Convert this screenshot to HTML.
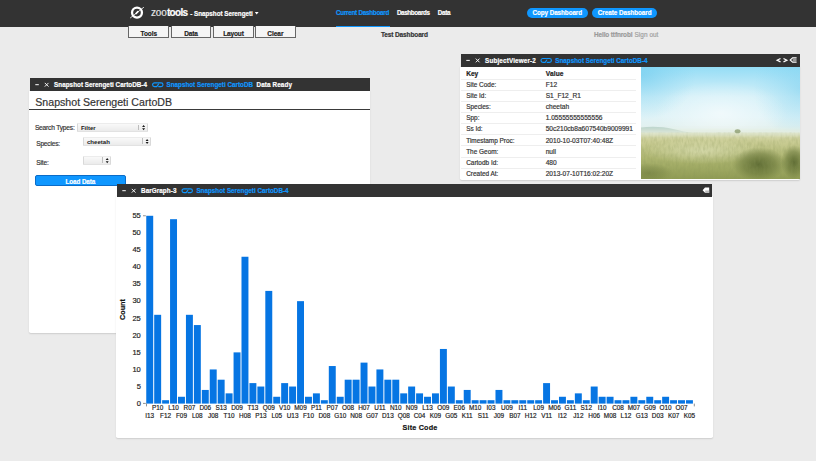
<!DOCTYPE html>
<html><head><meta charset="utf-8"><title>zootools</title>
<style>
html,body{margin:0;padding:0}
body{width:816px;height:461px;overflow:hidden;background:#ebebeb;font-family:"Liberation Sans",sans-serif;position:relative;color:#333}
*{box-sizing:border-box}
.a{position:absolute}
.pill{position:absolute;top:7.7px;height:10.7px;border-radius:5.4px;background:#0f97ff}
.tb{position:absolute;top:26px;height:11.6px;width:40.6px;border:0.85px solid #666;border-top:none;background:#f5f5f5}
.panel{position:absolute;background:#fff;box-shadow:0 0.5px 1.6px rgba(0,0,0,.13);border-radius:0 0 1.8px 1.8px}
.sel{position:absolute;background:linear-gradient(#f9f9f9,#ebebeb);border:0.6px solid #d9d9d9;border-top-color:#ececec;border-bottom-color:#e2e2e2;border-radius:1px}
text{white-space:pre;stroke-width:0.18px}
.yt{font-size:7.5px;fill:#222;stroke:#222}
.xt{font-size:6.4px;fill:#222;stroke:#222}
.ax{font-size:7.2px;font-weight:bold;fill:#111;stroke:#111}
</style></head><body>
<div class="a" style="left:0;top:0;width:816px;height:26.9px;background:#333"></div>
<div class="a" style="left:336px;top:25.6px;width:53.5px;height:1.8px;background:#0f97ff"></div>
<div class="pill" style="left:526.8px;width:61.2px"></div><div class="pill" style="left:592.2px;width:65.3px"></div>
<div class="tb" style="left:128.2px"></div><div class="tb" style="left:170.5px"></div><div class="tb" style="left:213px"></div><div class="tb" style="left:255.4px"></div>
<div class="panel" style="left:29.2px;top:91px;width:341.2px;height:241.7px"></div>
<div class="a" style="left:29.8px;top:78.2px;width:340px;height:13px;background:#333"></div>
<div class="a" style="left:29.2px;top:108.9px;width:340.9px;height:0.9px;background:#3a3a3a"></div>
<div class="sel" style="left:76.6px;top:123.3px;width:71.1px;height:8.5px"><div class="a" style="right:7.8px;top:0.4px;bottom:0.4px;width:0.7px;background:#bdbdbd"></div></div>
<div class="sel" style="left:83px;top:137.1px;width:68.2px;height:8.6px"><div class="a" style="right:7.8px;top:0.4px;bottom:0.4px;width:0.7px;background:#bdbdbd"></div></div>
<div class="sel" style="left:83px;top:156.1px;width:28.3px;height:8.7px"><div class="a" style="right:7.8px;top:0.4px;bottom:0.4px;width:0.7px;background:#bdbdbd"></div></div>
<div class="a" style="left:35.3px;top:175.2px;width:91.1px;height:11.3px;border-radius:2px;background:#0f97ff;border:0.7px solid #0b6cc8"></div>
<div class="panel" style="left:460.2px;top:66.5px;width:340.3px;height:113.1px"></div>
<div class="a" style="left:460.8px;top:53.7px;width:339.2px;height:13px;background:#333"></div>
<div class="a" style="left:461px;top:78.90px;width:175px;height:0.7px;background:#eeeeee"></div>
<div class="a" style="left:461px;top:89.99px;width:175px;height:0.7px;background:#eeeeee"></div>
<div class="a" style="left:461px;top:101.08px;width:175px;height:0.7px;background:#eeeeee"></div>
<div class="a" style="left:461px;top:112.17px;width:175px;height:0.7px;background:#eeeeee"></div>
<div class="a" style="left:461px;top:123.26px;width:175px;height:0.7px;background:#eeeeee"></div>
<div class="a" style="left:461px;top:134.35px;width:175px;height:0.7px;background:#eeeeee"></div>
<div class="a" style="left:461px;top:145.44px;width:175px;height:0.7px;background:#eeeeee"></div>
<div class="a" style="left:461px;top:156.53px;width:175px;height:0.7px;background:#eeeeee"></div>
<div class="a" style="left:461px;top:167.62px;width:175px;height:0.7px;background:#eeeeee"></div>

<svg class="a" style="left:641px;top:66.7px" width="159" height="111.95" viewBox="0 0 159 111.95">
<defs>
<linearGradient id="sky" x1="0" y1="0" x2="0" y2="1"><stop offset="0" stop-color="#92dcf5"/><stop offset="0.22" stop-color="#b4e6f7"/><stop offset="0.45" stop-color="#d3f0f8"/><stop offset="0.75" stop-color="#e0f3f7"/><stop offset="1" stop-color="#e3efea"/></linearGradient>
<radialGradient id="cy" cx="0.5" cy="0.5" r="0.5"><stop offset="0" stop-color="#6fcbee" stop-opacity="0.6"/><stop offset="1" stop-color="#7fd3f2" stop-opacity="0"/></radialGradient>
<radialGradient id="wh" cx="0.5" cy="0.5" r="0.5"><stop offset="0" stop-color="#fff" stop-opacity="0.55"/><stop offset="1" stop-color="#fff" stop-opacity="0"/></radialGradient>
<linearGradient id="grass" x1="0" y1="0" x2="0" y2="1"><stop offset="0" stop-color="#d6d7a8"/><stop offset="0.22" stop-color="#c8cb92"/><stop offset="0.55" stop-color="#adb570"/><stop offset="1" stop-color="#8f9b53"/></linearGradient>
<radialGradient id="dk" cx="0.5" cy="0.5" r="0.5"><stop offset="0" stop-color="#4d5c27" stop-opacity="0.8"/><stop offset="0.6" stop-color="#56652c" stop-opacity="0.45"/><stop offset="1" stop-color="#56652c" stop-opacity="0"/></radialGradient>
<radialGradient id="lt" cx="0.5" cy="0.5" r="0.5"><stop offset="0" stop-color="#dcdfb4" stop-opacity="0.75"/><stop offset="1" stop-color="#dcdfb4" stop-opacity="0"/></radialGradient>
<filter id="gr" x="0" y="0" width="1" height="1"><feTurbulence type="fractalNoise" baseFrequency="0.4 0.16" numOctaves="2" seed="4"/><feColorMatrix type="matrix" values="0 0 0 0 0.25  0 0 0 0 0.3  0 0 0 0 0.1  0.9 0 0 0 -0.32"/></filter>
<filter id="bl" x="-0.1" y="-2" width="1.2" height="5"><feGaussianBlur stdDeviation="2.2"/></filter>
<clipPath id="cp"><rect y="-1" width="159" height="113"/></clipPath>
</defs>
<g clip-path="url(#cp)">
<rect y="-1" width="159" height="68" fill="url(#sky)"/>
<ellipse cx="0" cy="8" rx="55" ry="45" fill="url(#cy)"/>
<ellipse cx="162" cy="22" rx="50" ry="50" fill="url(#cy)" opacity="0.8"/>
<ellipse cx="80" cy="46" rx="66" ry="32" fill="url(#wh)"/>
<path d="M0 60.5C10 59 22 59.5 32 62 40 64 46 65.3 52 66V67H0z" fill="#9fbdb0" opacity="0.55"/>
<rect y="65.6" width="159" height="47" fill="url(#grass)"/>
<ellipse cx="62" cy="84" rx="60" ry="13" fill="url(#lt)"/>
<ellipse cx="118" cy="97" rx="27" ry="17" fill="url(#dk)"/>
<ellipse cx="153" cy="95" rx="13" ry="17" fill="url(#dk)"/>
<ellipse cx="8" cy="106" rx="24" ry="10" fill="url(#dk)" opacity="0.45"/>
<rect y="66" width="159" height="46.5" filter="url(#gr)" opacity="0.6"/>
<rect x="-8" y="63" width="175" height="5.5" fill="#e2ebdc" opacity="0.85" filter="url(#bl)"/>
<ellipse cx="96.6" cy="64.2" rx="2.9" ry="2" fill="#879868" opacity="0.75"/>
</g></svg>
<div class="panel" style="left:116.1px;top:196.4px;width:597.2px;height:241.8px"></div>
<div class="a" style="left:116.8px;top:183.6px;width:595.5px;height:13px;background:#333"></div>
<svg class="a" style="left:0;top:0" width="816" height="461" viewBox="0 0 816 461" font-family="'Liberation Sans',sans-serif">
<g fill="#0675e3">
<rect x="146.25" y="215.78" width="6.95" height="187.82"/>
<rect x="154.19" y="314.81" width="6.95" height="88.79"/>
<rect x="162.12" y="400.19" width="6.95" height="3.42"/>
<rect x="170.06" y="219.19" width="6.95" height="184.41"/>
<rect x="178.00" y="396.77" width="6.95" height="6.83"/>
<rect x="185.94" y="314.81" width="6.95" height="88.79"/>
<rect x="193.87" y="325.06" width="6.95" height="78.55"/>
<rect x="201.81" y="389.94" width="6.95" height="13.66"/>
<rect x="209.75" y="369.45" width="6.95" height="34.15"/>
<rect x="217.68" y="379.70" width="6.95" height="23.91"/>
<rect x="225.62" y="393.36" width="6.95" height="10.25"/>
<rect x="233.56" y="352.38" width="6.95" height="51.23"/>
<rect x="241.49" y="256.75" width="6.95" height="146.84"/>
<rect x="249.43" y="383.11" width="6.95" height="20.49"/>
<rect x="257.37" y="386.53" width="6.95" height="17.07"/>
<rect x="265.31" y="290.91" width="6.95" height="112.70"/>
<rect x="273.24" y="396.77" width="6.95" height="6.83"/>
<rect x="281.18" y="383.11" width="6.95" height="20.49"/>
<rect x="289.12" y="386.53" width="6.95" height="17.07"/>
<rect x="297.05" y="301.15" width="6.95" height="102.45"/>
<rect x="304.99" y="396.77" width="6.95" height="6.83"/>
<rect x="312.93" y="393.36" width="6.95" height="10.25"/>
<rect x="320.86" y="400.19" width="6.95" height="3.42"/>
<rect x="328.80" y="366.04" width="6.95" height="37.56"/>
<rect x="336.74" y="396.77" width="6.95" height="6.83"/>
<rect x="344.68" y="379.70" width="6.95" height="23.91"/>
<rect x="352.61" y="379.70" width="6.95" height="23.91"/>
<rect x="360.55" y="362.62" width="6.95" height="40.98"/>
<rect x="368.49" y="386.53" width="6.95" height="17.07"/>
<rect x="376.42" y="369.45" width="6.95" height="34.15"/>
<rect x="384.36" y="379.70" width="6.95" height="23.91"/>
<rect x="392.30" y="379.70" width="6.95" height="23.91"/>
<rect x="400.23" y="393.36" width="6.95" height="10.25"/>
<rect x="408.17" y="386.53" width="6.95" height="17.07"/>
<rect x="416.11" y="393.36" width="6.95" height="10.25"/>
<rect x="424.05" y="396.77" width="6.95" height="6.83"/>
<rect x="431.98" y="393.36" width="6.95" height="10.25"/>
<rect x="439.92" y="348.96" width="6.95" height="54.64"/>
<rect x="447.86" y="386.53" width="6.95" height="17.07"/>
<rect x="455.79" y="400.19" width="6.95" height="3.42"/>
<rect x="463.73" y="389.94" width="6.95" height="13.66"/>
<rect x="471.67" y="400.19" width="6.95" height="3.42"/>
<rect x="479.60" y="400.19" width="6.95" height="3.42"/>
<rect x="487.54" y="400.19" width="6.95" height="3.42"/>
<rect x="495.48" y="389.94" width="6.95" height="13.66"/>
<rect x="503.42" y="400.19" width="6.95" height="3.42"/>
<rect x="511.35" y="400.19" width="6.95" height="3.42"/>
<rect x="519.29" y="400.19" width="6.95" height="3.42"/>
<rect x="527.23" y="400.19" width="6.95" height="3.42"/>
<rect x="535.16" y="400.19" width="6.95" height="3.42"/>
<rect x="543.10" y="383.11" width="6.95" height="20.49"/>
<rect x="551.04" y="400.19" width="6.95" height="3.42"/>
<rect x="558.97" y="396.77" width="6.95" height="6.83"/>
<rect x="566.91" y="400.19" width="6.95" height="3.42"/>
<rect x="574.85" y="393.36" width="6.95" height="10.25"/>
<rect x="582.79" y="400.19" width="6.95" height="3.42"/>
<rect x="590.72" y="386.53" width="6.95" height="17.07"/>
<rect x="598.66" y="396.77" width="6.95" height="6.83"/>
<rect x="606.60" y="396.77" width="6.95" height="6.83"/>
<rect x="614.53" y="400.19" width="6.95" height="3.42"/>
<rect x="622.47" y="400.19" width="6.95" height="3.42"/>
<rect x="630.41" y="396.77" width="6.95" height="6.83"/>
<rect x="638.34" y="400.19" width="6.95" height="3.42"/>
<rect x="646.28" y="396.77" width="6.95" height="6.83"/>
<rect x="654.22" y="400.19" width="6.95" height="3.42"/>
<rect x="662.15" y="396.77" width="6.95" height="6.83"/>
<rect x="670.09" y="400.19" width="6.95" height="3.42"/>
<rect x="678.03" y="400.19" width="6.95" height="3.42"/>
<rect x="685.97" y="400.19" width="6.95" height="3.42"/>
</g>
<text x="140.8" y="405.90" text-anchor="end" class="yt">0</text>
<text x="140.8" y="388.83" text-anchor="end" class="yt">5</text>
<text x="140.8" y="371.75" text-anchor="end" class="yt">10</text>
<text x="140.8" y="354.68" text-anchor="end" class="yt">15</text>
<text x="140.8" y="337.60" text-anchor="end" class="yt">20</text>
<text x="140.8" y="320.53" text-anchor="end" class="yt">25</text>
<text x="140.8" y="303.45" text-anchor="end" class="yt">30</text>
<text x="140.8" y="286.38" text-anchor="end" class="yt">35</text>
<text x="140.8" y="269.30" text-anchor="end" class="yt">40</text>
<text x="140.8" y="252.23" text-anchor="end" class="yt">45</text>
<text x="140.8" y="235.15" text-anchor="end" class="yt">50</text>
<text x="140.8" y="218.08" text-anchor="end" class="yt">55</text>
<path d="M143 215.78H145.8M143 403.40H145.8M146.5 403.60v2.8M694.3 403.60v2.8" stroke="#444" stroke-width="0.6" fill="none"/>
<text x="149.72" y="418" text-anchor="middle" class="xt">I13</text>
<text x="157.66" y="410" text-anchor="middle" class="xt">P10</text>
<text x="165.60" y="418" text-anchor="middle" class="xt">F12</text>
<text x="173.54" y="410" text-anchor="middle" class="xt">L10</text>
<text x="181.47" y="418" text-anchor="middle" class="xt">F09</text>
<text x="189.41" y="410" text-anchor="middle" class="xt">R07</text>
<text x="197.35" y="418" text-anchor="middle" class="xt">L08</text>
<text x="205.28" y="410" text-anchor="middle" class="xt">D06</text>
<text x="213.22" y="418" text-anchor="middle" class="xt">J08</text>
<text x="221.16" y="410" text-anchor="middle" class="xt">S13</text>
<text x="229.09" y="418" text-anchor="middle" class="xt">T10</text>
<text x="237.03" y="410" text-anchor="middle" class="xt">D09</text>
<text x="244.97" y="418" text-anchor="middle" class="xt">H08</text>
<text x="252.91" y="410" text-anchor="middle" class="xt">T13</text>
<text x="260.84" y="418" text-anchor="middle" class="xt">P13</text>
<text x="268.78" y="410" text-anchor="middle" class="xt">Q09</text>
<text x="276.72" y="418" text-anchor="middle" class="xt">L05</text>
<text x="284.65" y="410" text-anchor="middle" class="xt">V10</text>
<text x="292.59" y="418" text-anchor="middle" class="xt">U13</text>
<text x="300.53" y="410" text-anchor="middle" class="xt">M09</text>
<text x="308.47" y="418" text-anchor="middle" class="xt">F10</text>
<text x="316.40" y="410" text-anchor="middle" class="xt">P11</text>
<text x="324.34" y="418" text-anchor="middle" class="xt">D08</text>
<text x="332.28" y="410" text-anchor="middle" class="xt">P07</text>
<text x="340.21" y="418" text-anchor="middle" class="xt">G10</text>
<text x="348.15" y="410" text-anchor="middle" class="xt">O08</text>
<text x="356.09" y="418" text-anchor="middle" class="xt">N08</text>
<text x="364.02" y="410" text-anchor="middle" class="xt">H07</text>
<text x="371.96" y="418" text-anchor="middle" class="xt">G07</text>
<text x="379.90" y="410" text-anchor="middle" class="xt">U11</text>
<text x="387.84" y="418" text-anchor="middle" class="xt">D13</text>
<text x="395.77" y="410" text-anchor="middle" class="xt">N10</text>
<text x="403.71" y="418" text-anchor="middle" class="xt">Q08</text>
<text x="411.65" y="410" text-anchor="middle" class="xt">N09</text>
<text x="419.58" y="418" text-anchor="middle" class="xt">C04</text>
<text x="427.52" y="410" text-anchor="middle" class="xt">L13</text>
<text x="435.46" y="418" text-anchor="middle" class="xt">K09</text>
<text x="443.39" y="410" text-anchor="middle" class="xt">O09</text>
<text x="451.33" y="418" text-anchor="middle" class="xt">G05</text>
<text x="459.27" y="410" text-anchor="middle" class="xt">E06</text>
<text x="467.21" y="418" text-anchor="middle" class="xt">K11</text>
<text x="475.14" y="410" text-anchor="middle" class="xt">M10</text>
<text x="483.08" y="418" text-anchor="middle" class="xt">S11</text>
<text x="491.02" y="410" text-anchor="middle" class="xt">I03</text>
<text x="498.95" y="418" text-anchor="middle" class="xt">J09</text>
<text x="506.89" y="410" text-anchor="middle" class="xt">U09</text>
<text x="514.83" y="418" text-anchor="middle" class="xt">B07</text>
<text x="522.76" y="410" text-anchor="middle" class="xt">I11</text>
<text x="530.70" y="418" text-anchor="middle" class="xt">H12</text>
<text x="538.64" y="410" text-anchor="middle" class="xt">L09</text>
<text x="546.58" y="418" text-anchor="middle" class="xt">V11</text>
<text x="554.51" y="410" text-anchor="middle" class="xt">M06</text>
<text x="562.45" y="418" text-anchor="middle" class="xt">I12</text>
<text x="570.39" y="410" text-anchor="middle" class="xt">G11</text>
<text x="578.32" y="418" text-anchor="middle" class="xt">J12</text>
<text x="586.26" y="410" text-anchor="middle" class="xt">S12</text>
<text x="594.20" y="418" text-anchor="middle" class="xt">H06</text>
<text x="602.13" y="410" text-anchor="middle" class="xt">I10</text>
<text x="610.07" y="418" text-anchor="middle" class="xt">M08</text>
<text x="618.01" y="410" text-anchor="middle" class="xt">C08</text>
<text x="625.95" y="418" text-anchor="middle" class="xt">L12</text>
<text x="633.88" y="410" text-anchor="middle" class="xt">M07</text>
<text x="641.82" y="418" text-anchor="middle" class="xt">G13</text>
<text x="649.76" y="410" text-anchor="middle" class="xt">G09</text>
<text x="657.69" y="418" text-anchor="middle" class="xt">D03</text>
<text x="665.63" y="410" text-anchor="middle" class="xt">O10</text>
<text x="673.57" y="418" text-anchor="middle" class="xt">K07</text>
<text x="681.50" y="410" text-anchor="middle" class="xt">O07</text>
<text x="689.44" y="418" text-anchor="middle" class="xt">K05</text>
<text x="419.9" y="430" text-anchor="middle" class="ax" textLength="34.7">Site Code</text>
<text transform="translate(124.8,309.5) rotate(-90)" text-anchor="middle" class="ax">Count</text>
<g><circle cx="137" cy="12.6" r="4.95" fill="none" stroke="#fff" stroke-width="2.3"/><path d="M136.1 13.5L137.9 11.7" stroke="#fff" stroke-width="1.7" stroke-linecap="round"/><path d="M130.2 18L143.9 7.2" stroke="#fff" stroke-width="0.8"/></g>
<path d="M254.8 11.9h3.8l-1.9 2.6z" fill="#fff"/>
<path d="M35.30 84.70h3.5" stroke="#fff" stroke-width="1"/>
<path d="M44.80 82.90l3.7 3.7m0-3.7l-3.7 3.7" stroke="#fff" stroke-width="0.95"/>
<g transform="translate(152.00,82.20)" fill="none" stroke="#0f97ff" stroke-width="1.15" stroke-linecap="round" stroke-linejoin="round"><path d="M5.4 0.6H2.5a1.9 1.9 0 0 0 0 3.8H4.7L6.4 2.1M6.3 0.6H9.1a1.9 1.9 0 0 1 0 3.8H6.7"/></g>
<path d="M143.60 125.05l1.5 2h-3zM143.60 130.25l1.5-2h-3z" fill="#1a1a1a"/>
<path d="M147.10 138.90l1.5 2h-3zM147.10 144.10l1.5-2h-3z" fill="#1a1a1a"/>
<path d="M107.20 157.95l1.5 2h-3zM107.20 163.15l1.5-2h-3z" fill="#1a1a1a"/>
<path d="M466.30 60.40h3.5" stroke="#fff" stroke-width="1"/>
<path d="M475.80 58.60l3.7 3.7m0-3.7l-3.7 3.7" stroke="#fff" stroke-width="0.95"/>
<g transform="translate(540.40,57.90)" fill="none" stroke="#0f97ff" stroke-width="1.15" stroke-linecap="round" stroke-linejoin="round"><path d="M5.4 0.6H2.5a1.9 1.9 0 0 0 0 3.8H4.7L6.4 2.1M6.3 0.6H9.1a1.9 1.9 0 0 1 0 3.8H6.7"/></g>
<g transform="translate(776,57)" fill="none" stroke="#fff" stroke-width="1.1"><path d="M4.5 1.5L1.1 3.2 4.5 4.9M7.5 1.5L10.9 3.2 7.5 4.9" stroke-width="1.2"/><path d="M20.6 0.9H16.6L14.2 3 16.6 5.1H20.6M16.6 3H20.6"/></g>
<path d="M122.30 190.70h3.5" stroke="#fff" stroke-width="1"/>
<path d="M131.80 188.90l3.7 3.7m0-3.7l-3.7 3.7" stroke="#fff" stroke-width="0.95"/>
<g transform="translate(181.40,188.20)" fill="none" stroke="#0f97ff" stroke-width="1.15" stroke-linecap="round" stroke-linejoin="round"><path d="M5.4 0.6H2.5a1.9 1.9 0 0 0 0 3.8H4.7L6.4 2.1M6.3 0.6H9.1a1.9 1.9 0 0 1 0 3.8H6.7"/></g>
<g transform="translate(702.6,187.6)"><path d="M0 2.6L2.4 0H6.6V5.2H2.4z" fill="#fff"/><path d="M2.6 2.9H6.6V5.2H2.6z" fill="#bbb"/></g>
<text x="466.20" y="87.00" font-size="6.45" fill="#333" stroke="#333">Site Code:</text>
<text x="545.70" y="87.00" font-size="6.6" fill="#333" stroke="#333">F12</text>
<text x="466.20" y="98.00" font-size="6.45" fill="#333" stroke="#333">Site Id:</text>
<text x="545.70" y="98.00" font-size="6.6" fill="#333" stroke="#333">S1_F12_R1</text>
<text x="466.20" y="109.00" font-size="6.45" fill="#333" stroke="#333">Species:</text>
<text x="545.70" y="109.00" font-size="6.6" fill="#333" stroke="#333">cheetah</text>
<text x="466.20" y="120.00" font-size="6.45" fill="#333" stroke="#333">Spp:</text>
<text x="545.70" y="120.00" font-size="6.6" fill="#333" stroke="#333">1.05555555555556</text>
<text x="466.20" y="131.00" font-size="6.45" fill="#333" stroke="#333">Ss Id:</text>
<text x="545.70" y="131.00" font-size="6.6" fill="#333" stroke="#333">50c210cb8a607540b9009991</text>
<text x="466.20" y="143.00" font-size="6.45" fill="#333" stroke="#333">Timestamp Proc:</text>
<text x="545.70" y="143.00" font-size="6.6" fill="#333" stroke="#333">2010-10-03T07:40:48Z</text>
<text x="466.20" y="154.00" font-size="6.45" fill="#333" stroke="#333">The Geom:</text>
<text x="545.70" y="154.00" font-size="6.6" fill="#333" stroke="#333">null</text>
<text x="466.20" y="165.00" font-size="6.45" fill="#333" stroke="#333">Cartodb Id:</text>
<text x="545.70" y="165.00" font-size="6.6" fill="#333" stroke="#333">480</text>
<text x="466.20" y="176.00" font-size="6.45" fill="#333" stroke="#333">Created At:</text>
<text x="545.70" y="176.00" font-size="6.6" fill="#333" stroke="#333">2013-07-10T16:02:20Z</text>
<text x="151.00" y="16.00" font-size="10" fill="#e6e6e6" stroke="#e6e6e6" textLength="15.70" lengthAdjust="spacing">zoo</text>
<text x="166.90" y="16.00" font-size="10" font-weight="bold" fill="#fff" stroke="#fff" textLength="21.20" lengthAdjust="spacing">tools</text>
<text x="190.20" y="15.50" font-size="6.3" font-weight="bold" fill="#fff" stroke="#fff" textLength="62.60" lengthAdjust="spacing">- Snapshot Serengeti</text>
<text x="336.00" y="15.20" font-size="6.3" font-weight="bold" fill="#0f97ff" stroke="#0f97ff" textLength="53.30" lengthAdjust="spacing">Current Dashboard</text>
<text x="396.90" y="15.20" font-size="6.3" font-weight="bold" fill="#fff" stroke="#fff" textLength="33.10" lengthAdjust="spacing">Dashboards</text>
<text x="437.70" y="15.20" font-size="6.3" font-weight="bold" fill="#fff" stroke="#fff" textLength="12.90" lengthAdjust="spacing">Data</text>
<text x="532.50" y="15.45" font-size="6.3" font-weight="bold" fill="#fff" stroke="#fff" textLength="49.60" lengthAdjust="spacing">Copy Dashboard</text>
<text x="597.80" y="15.45" font-size="6.3" font-weight="bold" fill="#fff" stroke="#fff" textLength="53.80" lengthAdjust="spacing">Create Dashboard</text>
<text x="140.50" y="36.00" font-size="6.5" font-weight="bold" fill="#222" stroke="#222" textLength="16.50" lengthAdjust="spacing">Tools</text>
<text x="184.20" y="36.00" font-size="6.5" font-weight="bold" fill="#222" stroke="#222" textLength="13.60" lengthAdjust="spacing">Data</text>
<text x="223.20" y="36.00" font-size="6.5" font-weight="bold" fill="#222" stroke="#222" textLength="20.60" lengthAdjust="spacing">Layout</text>
<text x="267.20" y="36.00" font-size="6.5" font-weight="bold" fill="#222" stroke="#222" textLength="16.30" lengthAdjust="spacing">Clear</text>
<text x="381.00" y="37.00" font-size="6.5" font-weight="bold" fill="#333" stroke="#333" textLength="47.00" lengthAdjust="spacing">Test Dashboard</text>
<text x="594.00" y="36.60" font-size="6.4" font-weight="bold" fill="#9a9a9a" stroke="#9a9a9a" textLength="38.50" lengthAdjust="spacing">Hello ttfnrobl</text>
<text x="634.50" y="36.60" font-size="6.4" fill="#a0a0a0" stroke="#a0a0a0" textLength="23.90" lengthAdjust="spacing">Sign out</text>
<text x="54.10" y="87.00" font-size="6.3" font-weight="bold" fill="#fff" stroke="#fff" textLength="92.90" lengthAdjust="spacing">Snapshot Serengeti CartoDB-4</text>
<text x="166.50" y="87.00" font-size="6.3" font-weight="bold" fill="#0f97ff" stroke="#0f97ff" textLength="86.50" lengthAdjust="spacing">Snapshot Serengeti CartoDB</text>
<text x="256.50" y="87.00" font-size="6.3" font-weight="bold" fill="#fff" stroke="#fff" textLength="35.50" lengthAdjust="spacing">Data Ready</text>
<text x="35.30" y="106.00" font-size="10.6" fill="#333" stroke="#333" textLength="136.70" lengthAdjust="spacing">Snapshot Serengeti CartoDB</text>
<text x="34.90" y="130.20" font-size="6.6" fill="#333" stroke="#333" textLength="39.90" lengthAdjust="spacing">Search Types:</text>
<text x="80.90" y="130.00" font-size="6.05" font-weight="bold" fill="#1a1a1a" stroke="#1a1a1a" textLength="14.80" lengthAdjust="spacing" style="stroke-width:0">Filter</text>
<text x="36.20" y="146.30" font-size="6.6" fill="#333" stroke="#333" textLength="23.90" lengthAdjust="spacing">Species:</text>
<text x="87.00" y="143.80" font-size="6.05" font-weight="bold" fill="#1a1a1a" stroke="#1a1a1a" textLength="22.90" lengthAdjust="spacing" style="stroke-width:0">cheetah</text>
<text x="36.20" y="165.00" font-size="6.6" fill="#333" stroke="#333" textLength="12.60" lengthAdjust="spacing">Site:</text>
<text x="65.60" y="183.50" font-size="6.3" font-weight="bold" fill="#fff" stroke="#fff" textLength="29.70" lengthAdjust="spacing">Load Data</text>
<text x="485.10" y="62.70" font-size="6.3" font-weight="bold" fill="#fff" stroke="#fff" textLength="50.70" lengthAdjust="spacing">SubjectViewer-2</text>
<text x="555.30" y="62.70" font-size="6.3" font-weight="bold" fill="#0f97ff" stroke="#0f97ff" textLength="92.20" lengthAdjust="spacing">Snapshot Serengeti CartoDB-4</text>
<text x="466.30" y="75.60" font-size="6.6" font-weight="bold" fill="#222" stroke="#222" textLength="11.90" lengthAdjust="spacing">Key</text>
<text x="545.70" y="75.60" font-size="6.6" font-weight="bold" fill="#222" stroke="#222" textLength="17.80" lengthAdjust="spacing">Value</text>
<text x="141.10" y="193.00" font-size="6.3" font-weight="bold" fill="#fff" stroke="#fff" textLength="35.30" lengthAdjust="spacing">BarGraph-3</text>
<text x="196.40" y="193.00" font-size="6.3" font-weight="bold" fill="#0f97ff" stroke="#0f97ff" textLength="92.20" lengthAdjust="spacing">Snapshot Serengeti CartoDB-4</text>
</svg>
</body></html>
